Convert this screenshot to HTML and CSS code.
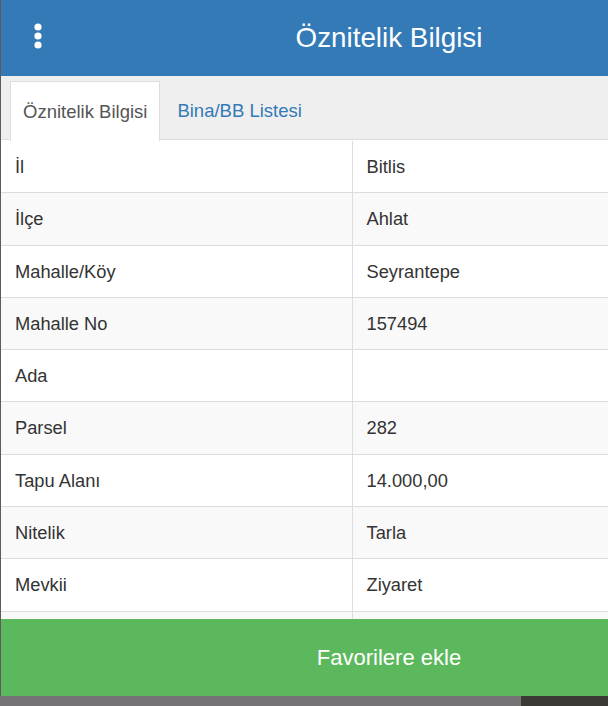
FILE: index.html
```html
<!DOCTYPE html>
<html lang="tr">
<head>
<meta charset="utf-8">
<title>Öznitelik Bilgisi</title>
<link rel="stylesheet" href="styles.css">
</head>
<body>
<div class="panel">
  <header class="header">
    <button class="kebab" aria-label="Menü">
      <svg width="10" height="28" viewBox="0 0 10 28"><circle cx="5" cy="5" r="3.6" fill="#fff"/><circle cx="5" cy="14" r="3.6" fill="#fff"/><circle cx="5" cy="23" r="3.6" fill="#fff"/></svg>
    </button>
    <h1 class="title">Öznitelik Bilgisi</h1>
    <span></span>
  </header>
  <div class="content">
    <ul class="tabs">
      <li class="tab active">Öznitelik Bilgisi</li>
      <li class="tab link">Bina/BB Listesi</li>
    </ul>
    <table class="attrs">
      <colgroup><col class="c1"><col class="c2"></colgroup>
      <tbody>
        <tr><td>İl</td><td>Bitlis</td></tr>
        <tr><td>İlçe</td><td>Ahlat</td></tr>
        <tr><td>Mahalle/Köy</td><td>Seyrantepe</td></tr>
        <tr><td>Mahalle No</td><td>157494</td></tr>
        <tr><td>Ada</td><td></td></tr>
        <tr><td>Parsel</td><td>282</td></tr>
        <tr><td>Tapu Alanı</td><td>14.000,00</td></tr>
        <tr><td>Nitelik</td><td>Tarla</td></tr>
        <tr><td>Mevkii</td><td>Ziyaret</td></tr>
        <tr><td>&nbsp;</td><td>&nbsp;</td></tr>
      </tbody>
    </table>
  </div>
  <button class="fav">Favorilere ekle</button>
</div>
<div class="map-strip"><span class="map-a"></span><span class="map-b"></span></div>
</body>
</html>
```
FILE: styles.css
```css
html, body {
  margin: 0;
  padding: 0;
}
body {
  width: 608px;
  height: 706px;
  overflow: hidden;
  background: #5e5b5e;
  font-family: "Liberation Sans", Arial, sans-serif;
}
.panel {
  width: 776px;
  margin-left: 1px;
  height: 696px;
  display: flex;
  flex-direction: column;
  background: #fff;
}
.header {
  height: 76px;
  flex: none;
  background: #337ab7;
  display: grid;
  grid-template-columns: 1fr auto 1fr;
  align-items: center;
}
.kebab {
  justify-self: start;
  margin-left: 32px;
  padding: 0;
  border: 0;
  background: none;
  display: flex;
  margin-top: -4px;
}
.title {
  margin: 0;
  color: #fff;
  font-weight: normal;
  font-size: 27.8px;
  line-height: 1;
}
.content {
  height: 543px;
  overflow: hidden;
  flex: none;
}
.tabs {
  list-style: none;
  margin: 0;
  padding: 5px 0 0 9px;
  display: flex;
  background: #efefef;
  border-bottom: 1px solid #dddddd;
  height: 58px;
}
.tab {
  font-size: 18.5px;
  padding: 0 12px;
  margin-right: 2px;
  display: flex;
  align-items: center;
  height: 58px;
  border: 1px solid transparent;
  border-bottom: 0;
}
.tab.active {
  background: #fff;
  color: #555;
  border-color: #dddddd;
  height: 59px;
  margin-bottom: -1px;
}
.tab.link {
  color: #337ab7;
  padding-left: 14px;
}
.attrs {
  width: 776px;
  table-layout: fixed;
  border-collapse: collapse;
  color: #333;
  font-size: 18.3px;
}
.c1 { width: 351px; }
.attrs td {
  padding: 14px 14px;
  line-height: 23.3px;
  border-top: 1px solid #dddddd;
  border-left: 1px solid #dddddd;
  white-space: nowrap;
}
.attrs td:first-child {
  border-left: 0;
}
.attrs tr:first-child td {
  border-top-color: #ffffff;
}
.attrs tr:nth-child(even) td {
  background: #f9f9f9;
}
.fav {
  height: 77px;
  flex: none;
  border: 0;
  margin: 0;
  background: #5cb85c;
  color: #fff;
  font-family: "Liberation Sans", Arial, sans-serif;
  font-size: 22px;
  padding: 0;
}
.map-strip {
  display: flex;
  height: 10px;
}
.map-a {
  width: 521px;
  background: #767276;
}
.map-b {
  flex: 1;
  background: #3d3935;
}
```
